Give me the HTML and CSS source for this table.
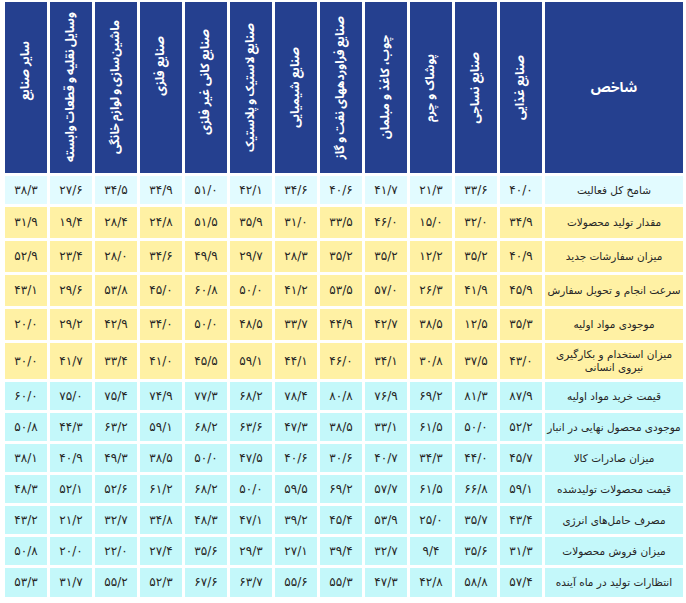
FILE: index.html
```html
<!DOCTYPE html>
<html lang="fa" dir="rtl">
<head>
<meta charset="utf-8">
<title>شامخ صنایع</title>
<link rel="stylesheet" href="styles.css">
</head>
<body>
<table class="grid">
  <colgroup>
    <col class="c-label">
    <col class="c-num"><col class="c-num"><col class="c-num"><col class="c-num">
    <col class="c-num"><col class="c-num"><col class="c-num"><col class="c-num">
    <col class="c-num"><col class="c-num"><col class="c-num"><col class="c-num">
  </colgroup>
  <thead>
    <tr class="head">
      <th class="h-label"><div class="hbox">شاخص</div></th>
      <th><div class="hbox"><span class="vt">صنایع غذایی</span></div></th>
      <th><div class="hbox"><span class="vt">صنایع نساجی</span></div></th>
      <th><div class="hbox"><span class="vt">پوشاک و چرم</span></div></th>
      <th><div class="hbox"><span class="vt">چوب، کاغذ و مبلمان</span></div></th>
      <th><div class="hbox"><span class="vt tight">صنایع فراوردههای نفت و گاز</span></div></th>
      <th><div class="hbox"><span class="vt">صنایع شیمیایی</span></div></th>
      <th><div class="hbox"><span class="vt tight">صنایع لاستیک و پلاستیک</span></div></th>
      <th><div class="hbox up-s"><span class="vt">صنایع کانی غیر فلزی</span></div></th>
      <th><div class="hbox up-l"><span class="vt">صنایع فلزی</span></div></th>
      <th><div class="hbox"><span class="vt tight">ماشین‌سازی و لوازم خانگی</span></div></th>
      <th><div class="hbox"><span class="vt tight">وسایل نقلیه و قطعات وابسته</span></div></th>
      <th><div class="hbox up-m"><span class="vt">سایر صنایع</span></div></th>
    </tr>
  </thead>
  <tbody>
    <tr class="r-total">
      <td class="lbl">شامخ کل فعالیت</td>
      <td>۴۰/۰</td><td>۳۳/۶</td><td>۲۱/۳</td><td>۴۱/۷</td><td>۴۰/۶</td><td>۳۴/۶</td><td>۴۲/۱</td><td>۵۱/۰</td><td>۳۴/۹</td><td>۳۴/۵</td><td>۲۷/۶</td><td>۳۸/۳</td>
    </tr>
    <tr class="r-yel">
      <td class="lbl">مقدار تولید محصولات</td>
      <td>۳۴/۹</td><td>۳۲/۰</td><td>۱۵/۰</td><td>۴۶/۰</td><td>۳۳/۵</td><td>۳۱/۰</td><td>۳۵/۹</td><td>۵۱/۵</td><td>۲۴/۸</td><td>۲۸/۴</td><td>۱۹/۴</td><td>۳۱/۹</td>
    </tr>
    <tr class="r-yel">
      <td class="lbl">میزان سفارشات جدید</td>
      <td>۴۰/۹</td><td>۳۵/۲</td><td>۱۲/۲</td><td>۳۵/۲</td><td>۳۵/۲</td><td>۲۸/۳</td><td>۲۹/۷</td><td>۴۹/۹</td><td>۳۴/۶</td><td>۲۸/۰</td><td>۲۳/۴</td><td>۵۲/۹</td>
    </tr>
    <tr class="r-yel">
      <td class="lbl">سرعت انجام و تحویل سفارش</td>
      <td>۴۵/۹</td><td>۴۱/۹</td><td>۲۶/۳</td><td>۵۷/۰</td><td>۵۳/۵</td><td>۴۱/۲</td><td>۵۰/۰</td><td>۶۰/۸</td><td>۴۵/۰</td><td>۵۳/۸</td><td>۲۹/۶</td><td>۴۳/۱</td>
    </tr>
    <tr class="r-yel">
      <td class="lbl">موجودی مواد اولیه</td>
      <td>۳۵/۳</td><td>۱۲/۵</td><td>۳۸/۵</td><td>۴۲/۷</td><td>۴۴/۹</td><td>۳۳/۷</td><td>۴۸/۵</td><td>۵۰/۰</td><td>۳۴/۰</td><td>۴۲/۹</td><td>۲۹/۲</td><td>۲۰/۰</td>
    </tr>
    <tr class="r-yel r-tall">
      <td class="lbl">میزان استخدام و بکارگیری<br>نیروی انسانی</td>
      <td>۴۳/۰</td><td>۳۷/۵</td><td>۳۰/۸</td><td>۳۴/۱</td><td>۴۶/۰</td><td>۴۴/۱</td><td>۵۹/۱</td><td>۴۵/۵</td><td>۴۱/۰</td><td>۳۳/۴</td><td>۴۱/۷</td><td>۳۰/۰</td>
    </tr>
    <tr class="r-cyan">
      <td class="lbl">قیمت خرید مواد اولیه</td>
      <td>۸۷/۹</td><td>۸۱/۳</td><td>۶۹/۲</td><td>۷۶/۹</td><td>۸۰/۸</td><td>۷۸/۴</td><td>۶۸/۲</td><td>۷۷/۳</td><td>۷۴/۹</td><td>۷۵/۴</td><td>۷۵/۰</td><td>۶۰/۰</td>
    </tr>
    <tr class="r-cyan">
      <td class="lbl">موجودی محصول نهایی در انبار</td>
      <td>۵۲/۲</td><td>۵۰/۰</td><td>۶۱/۵</td><td>۳۳/۱</td><td>۳۸/۵</td><td>۴۷/۳</td><td>۶۳/۶</td><td>۶۸/۲</td><td>۵۹/۱</td><td>۶۳/۲</td><td>۴۴/۳</td><td>۵۰/۸</td>
    </tr>
    <tr class="r-cyan">
      <td class="lbl">میزان صادرات کالا</td>
      <td>۴۵/۷</td><td>۴۴/۰</td><td>۳۴/۳</td><td>۴۰/۷</td><td>۳۰/۶</td><td>۴۰/۶</td><td>۴۷/۵</td><td>۵۰/۰</td><td>۳۸/۵</td><td>۴۹/۳</td><td>۴۰/۹</td><td>۳۸/۱</td>
    </tr>
    <tr class="r-cyan">
      <td class="lbl">قیمت محصولات تولیدشده</td>
      <td>۵۹/۱</td><td>۶۶/۸</td><td>۶۱/۵</td><td>۵۷/۷</td><td>۶۹/۲</td><td>۵۹/۵</td><td>۵۰/۰</td><td>۶۸/۲</td><td>۶۱/۲</td><td>۵۲/۶</td><td>۵۲/۱</td><td>۴۸/۳</td>
    </tr>
    <tr class="r-cyan">
      <td class="lbl">مصرف حامل‌های انرژی</td>
      <td>۴۳/۴</td><td>۳۵/۷</td><td>۲۵/۰</td><td>۵۳/۹</td><td>۴۵/۴</td><td>۳۹/۲</td><td>۴۷/۱</td><td>۴۸/۳</td><td>۳۴/۸</td><td>۳۲/۷</td><td>۲۱/۲</td><td>۴۳/۲</td>
    </tr>
    <tr class="r-cyan">
      <td class="lbl">میزان فروش محصولات</td>
      <td>۳۱/۳</td><td>۳۵/۶</td><td>۹/۴</td><td>۳۲/۷</td><td>۳۹/۴</td><td>۲۷/۱</td><td>۲۹/۳</td><td>۳۵/۶</td><td>۲۷/۴</td><td>۲۲/۰</td><td>۲۰/۰</td><td>۵۰/۸</td>
    </tr>
    <tr class="r-cyan r-last">
      <td class="lbl">انتظارات تولید در ماه آینده</td>
      <td>۵۷/۴</td><td>۵۸/۸</td><td>۴۲/۸</td><td>۴۷/۳</td><td>۵۵/۳</td><td>۵۵/۶</td><td>۶۳/۷</td><td>۶۷/۶</td><td>۵۲/۳</td><td>۵۵/۲</td><td>۳۱/۷</td><td>۵۳/۳</td>
    </tr>
  </tbody>
</table>
</body>
</html>
```

FILE: styles.css
```css
html, body {
  margin: 0;
  padding: 0;
  background: #ffffff;
}

body {
  font-family: "DejaVu Sans", "Noto Sans", sans-serif;
  color: #262626;
}

.grid {
  table-layout: fixed;
  border-collapse: separate;
  border-spacing: 3px;
  width: 684px;
  margin: -1px 0 0 1px;
}

.c-label { width: 138px; }
.c-num { width: 42px; }

.grid th,
.grid td {
  padding: 0;
  text-align: center;
  vertical-align: middle;
  overflow: hidden;
}

.head th {
  background: #25408f;
  color: #ffffff;
  font-family: "Noto Sans Arabic", "Noto Naskh Arabic", "DejaVu Sans", sans-serif;
  font-weight: bold;
  font-size: 12px;
}

.hbox {
  height: 171px;
  box-sizing: border-box;
  display: flex;
  align-items: center;
  justify-content: center;
  overflow: hidden;
}

.head .h-label {
  font-size: 14px;
}

.vt {
  writing-mode: vertical-rl;
  transform: rotate(180deg);
  white-space: nowrap;
  line-height: 16px;
}

.vt.tight {
  word-spacing: -1px;
}

.hbox.up-s { padding-bottom: 12px; }
.hbox.up-m { padding-bottom: 34px; }
.hbox.up-l { padding-bottom: 44px; }

.grid td {
  font-size: 12px;
  line-height: 13px;
  white-space: nowrap;
}

.grid td.lbl {
  font-size: 10.5px;
  line-height: 13px;
  padding: 0 2px;
}

.r-total td {
  height: 28px;
  background: #e2fbff;
}

.r-yel td {
  height: 31px;
  background: #fff1a4;
}

.r-tall td {
  height: 36px;
}

.r-cyan td {
  height: 28px;
  background: #c4f8fa;
}

.r-last td {
  height: 29px;
}
```
